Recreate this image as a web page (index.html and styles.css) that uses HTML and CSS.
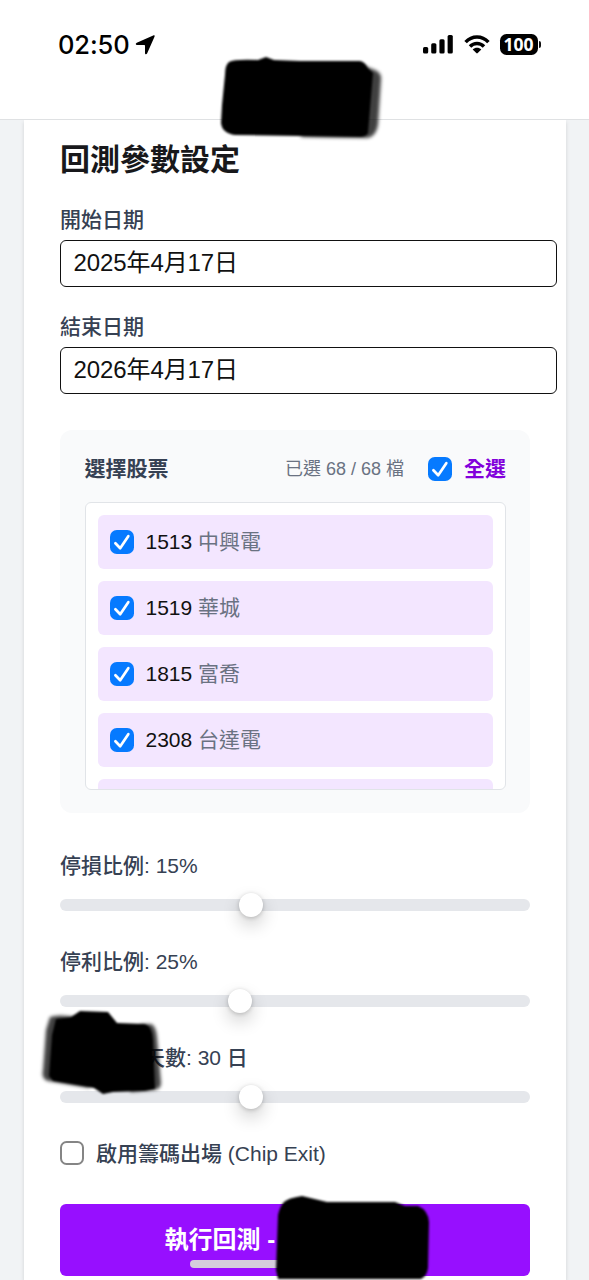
FILE: index.html
```
<!DOCTYPE html>
<html lang="zh-Hant">
<head>
<meta charset="utf-8">
<title>回測參數設定</title>
<link rel="stylesheet" href="styles.css">
</head>
<body>
<svg class="defs" aria-hidden="true">
  <symbol id="check" viewBox="0 0 24 24"><rect width="24" height="24" rx="6.8" fill="#067aff"/><path d="M5.4 13.2 L10.2 18.2 L18.3 6.2" fill="none" stroke="#fff" stroke-width="2.7" stroke-linecap="round" stroke-linejoin="round"/></symbol>
</svg>
<div class="screen">
  <header class="status">
    <div class="clock"><span>02:50</span>
      <svg class="arrow" viewBox="0 0 20 20"><path d="M18.2.5C19.4 0 20 .6 19.5 1.8L12.2 18.2C11.5 19.8 10 19.5 10 17.9V10.7Q10 10 9.3 10H2.1C.5 10 .2 8.5 1.8 7.8Z"/></svg>
    </div>
    <div class="signals">
      <svg class="bars" viewBox="0 0 30 19"><rect x="0" y="12" width="5.2" height="6.6" rx="1.5"/><rect x="8.2" y="8.2" width="5.2" height="10.4" rx="1.5"/><rect x="16.4" y="4.2" width="5.2" height="14.4" rx="1.5"/><rect x="24.6" y="0" width="5.2" height="18.6" rx="1.5"/></svg>
      <svg class="wifi" viewBox="0 0 26 19"><g fill="none" stroke="#000" stroke-width="3.5"><path d="M1.6 7.1C8 .3 18 .3 24.4 7.1"/><path d="M6 11.4C10 7.4 16 7.4 20 11.4"/></g><path d="M8.7 14.4C11 12.2 15 12.2 17.3 14.4L13.7 18.1Q13 18.8 12.3 18.1Z"/></svg>
      <div class="battery">100</div><i class="tip"></i>
    </div>
  </header>
  <main class="page">
    <section class="card">
      <h1>回測參數設定</h1>
      <div class="field"><label class="label">開始日期</label><div class="date">2025年4月17日</div></div>
      <div class="field"><label class="label">結束日期</label><div class="date">2026年4月17日</div></div>
      <div class="panel">
        <div class="panel-head">
          <strong>選擇股票</strong>
          <span class="count">已選 68 / 68 檔</span>
          <svg class="box"><use href="#check"/></svg>
          <span class="all">全選</span>
        </div>
        <div class="list">
          <div class="stock"><svg class="box"><use href="#check"/></svg><span>1513 <em>中興電</em></span></div>
          <div class="stock"><svg class="box"><use href="#check"/></svg><span>1519 <em>華城</em></span></div>
          <div class="stock"><svg class="box"><use href="#check"/></svg><span>1815 <em>富喬</em></span></div>
          <div class="stock"><svg class="box"><use href="#check"/></svg><span>2308 <em>台達電</em></span></div>
          <div class="stock"></div>
        </div>
      </div>
      <div class="slider"><div class="label">停損比例: 15%</div><div class="track"><i class="thumb stop-loss"></i></div></div>
      <div class="slider"><div class="label">停利比例: 25%</div><div class="track"><i class="thumb take-profit"></i></div></div>
      <div class="slider"><div class="label days">天數: 30 日</div><div class="track"><i class="thumb hold-days"></i></div></div>
      <div class="option"><i class="empty-box"></i><span class="label">啟用籌碼出場 (Chip Exit)</span></div>
      <div class="run">執行回測 -</div>
    </section>
  </main>
  <i class="home"></i>
  <svg class="marks" viewBox="0 0 589 1280">
    <path class="fade" d="M362 65L375 70Q382 73 381 80L378 125Q376 137 367 138L300 137L350 70Z"/>
    <path d="M229 62Q234 59 258 60L266 57L274 60L300 61H360Q365 62 368 68L373 73L368 133Q366 137 360 137L300 136L235 135Q222 133 221 123L222 105L225 75Q225 65 229 62Z"/>
    <path class="fade" d="M50 1017Q58 1014 76 1017L90 1088L48 1081Q41 1079 43 1070L46 1030Z"/>
    <path class="fade" d="M140 1024L151 1024Q156 1026 157 1037L161 1083Q161 1089 154 1090L130 1092Z"/>
    <path d="M56 1019L71 1017L80 1011L108 1012L117 1023L145 1024Q152 1026 153 1040L155 1089L145 1091L113 1092L103 1094L94 1088L53 1081L49 1076L52 1035Z"/>
    <path d="M284 1202Q288 1198 302 1196L327 1202H395L405 1206H418Q428 1210 429 1222L428 1268Q427 1276 421 1279H278L276 1270L278 1215Q280 1206 284 1202Z"/>
  </svg>
</div>
</body>
</html>
```
FILE: styles.css
```
* { box-sizing: border-box; }
body { margin: 0; background: #f1f3f5; font-family: "Liberation Sans", "Noto Sans CJK TC", sans-serif; }
.defs { position: absolute; width: 0; height: 0; }
.screen { position: relative; width: 589px; height: 1280px; overflow: hidden; display: flex; flex-direction: column; }
.status { height: 120px; flex: none; background: #fff; border-bottom: 1px solid #dfe1e3; display: flex; justify-content: space-between; align-items: flex-start; padding: 30px 48px 0 58px; }
.clock { display: flex; align-items: center; gap: 5px; height: 29px; font: 500 25.5px/29px Inter, sans-serif; letter-spacing: -.1px; }
.arrow { width: 20px; height: 20px; }
.signals { display: flex; align-items: center; height: 28px; }
.bars { width: 30px; height: 19px; margin-right: 11px; }
.wifi { width: 26px; height: 19px; margin-right: 10px; }
.battery { width: 38px; height: 21px; border-radius: 6.5px; background: #000; color: #fff; font: 700 17.5px/21px "Noto Sans", sans-serif; text-align: center; }
.tip { width: 2.5px; height: 7px; margin-left: 1px; border-radius: 0 3px 3px 0; background: #111; }
.page { flex: 1; padding: 0 23px 0 24px; }
.card { height: 1160px; background: #fff; padding: 19px 36px 0 36px; box-shadow: 0 2px 4px #0002; clip-path: inset(0 -5px); }
h1 { margin: 0 0 23px; font-size: 30px; line-height: 42px; font-weight: 600; color: #18181b; }
.label { display: block; height: 30px; font-size: 21px; line-height: 31px; font-weight: 500; color: #364153; white-space: nowrap; }
.field { margin-bottom: 24px; height: 83px; }
.date { width: 497px; height: 47px; margin-top: 6px; border: 1.5px solid #111; border-radius: 6px; padding: 0 12.5px; font-size: 24px; line-height: 44px; letter-spacing: -.1px; color: #111; }
.panel { margin-top: 36px; height: 383px; border-radius: 12px; background: #f9fafb; padding: 24px 24px 24px 24.5px; }
.panel-head { height: 30px; display: flex; align-items: center; font-size: 21px; line-height: 30px; color: #364153; }
.panel-head strong { margin-right: auto; }
.count { font-size: 18px; color: #6a7282; margin-right: 24px; }
.box { width: 24px; height: 24px; flex: none; margin-right: 12px; }
.all { font-weight: 700; color: #8200db; }
.list { margin-top: 18px; height: 288px; overflow: hidden; border: 1.5px solid #e1e4e8; border-radius: 6px; background: #fff; padding: 12px; display: flex; flex-direction: column; gap: 12px; }
.stock { height: 54px; flex: none; border-radius: 6px; background: #f3e6ff; padding-left: 12px; display: flex; align-items: center; font-size: 21px; line-height: 30px; color: #111; }
.stock em { font-style: normal; color: #6a7282; }
.slider { height: 72px; margin-bottom: 24px; }
.panel + .slider { margin-top: 37px; }
.track { position: relative; height: 12px; border-radius: 6px; background: #e5e7eb; margin-top: 19px; }
.thumb { position: absolute; top: -6px; width: 24px; height: 24px; border-radius: 50%; background: #fff; box-shadow: 0 1px 4px #0003, 0 8px 18px #0003; }
.stop-loss, .hold-days { left: 178.5px; }
.take-profit { left: 167.5px; }
.days { padding-left: 84px; }
.option { height: 30px; display: flex; align-items: center; gap: 12px; }
.empty-box { width: 24px; height: 24px; border: 2px solid #858585; border-radius: 6.5px; }
.run { height: 72px; margin-top: 36px; border-radius: 6px; background: #970fff; color: #fff; font-size: 24px; font-weight: 700; line-height: 72px; padding-left: 104.5px; }
.home { position: absolute; left: 190px; top: 1260px; width: 209px; height: 8px; border-radius: 4px; background: #d5cddc; }
.marks { position: absolute; left: 0; top: 0; width: 589px; height: 1280px; filter: blur(1px); }
.fade { opacity: .75; filter: blur(1.5px); }
```
